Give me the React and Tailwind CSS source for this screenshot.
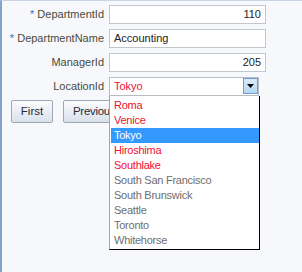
export default function App() {
  const items = [
    { t: "Roma", c: "red" },
    { t: "Venice", c: "red" },
    { t: "Tokyo", c: "sel" },
    { t: "Hiroshima", c: "red" },
    { t: "Southlake", c: "red" },
    { t: "South San Francisco", c: "gray" },
    { t: "South Brunswick", c: "gray" },
    { t: "Seattle", c: "gray" },
    { t: "Toronto", c: "gray" },
    { t: "Whitehorse", c: "gray" },
  ];
  return (
    <div className="w-[302px] h-[272px] bg-[#f6f8fb] border-l-2 border-l-[#86a3cc] border-t border-t-[#c9d5e3] font-['Liberation_Sans',Arial,sans-serif] text-[11px] text-[#222] overflow-hidden">
      <div className="pt-[4px] flex flex-col gap-[5px]">
        <div className="flex items-center h-[19px]">
          <div className="w-[102px] text-right text-[#4b4a3c]"><span className="text-[#3b6fb3]">*</span> DepartmentId</div>
          <div className="ml-[5px] w-[157px] h-[19px] bg-white border border-[#c3c7cc] flex items-center justify-end pr-[4px]">110</div>
        </div>
        <div className="flex items-center h-[19px]">
          <div className="w-[102px] text-right text-[#4b4a3c]"><span className="text-[#3b6fb3]">*</span> DepartmentName</div>
          <div className="ml-[5px] w-[157px] h-[19px] bg-white border border-[#c3c7cc] flex items-center pl-[4px]">Accounting</div>
        </div>
        <div className="flex items-center h-[19px]">
          <div className="w-[102px] text-right text-[#4b4a3c]">ManagerId</div>
          <div className="ml-[5px] w-[157px] h-[19px] bg-white border border-[#c3c7cc] flex items-center justify-end pr-[4px]">205</div>
        </div>
        <div className="flex items-center h-[19px]">
          <div className="w-[102px] text-right text-[#4b4a3c]">LocationId</div>
          <div className="relative ml-[5px] w-[150px] h-[19px]">
            <div className="w-full h-full bg-white border border-[#b9bdc3] flex items-center pl-[4px] text-[#ee1133]">
              Tokyo
            </div>
            <div className="absolute right-[1px] top-[1px] w-[15px] h-[16px] border border-[#6f9dcc] bg-gradient-to-b from-[#d9ecfb] to-[#b5d6f2] flex items-center justify-center">
              <svg width="7" height="4" viewBox="0 0 7 4"><path d="M0 0h7L3.5 4z" fill="#000" /></svg>
            </div>
            <div className="absolute left-0 top-[19px] w-[151px] bg-white border-l border-l-[#a6a6a6] border-r border-r-black border-b border-b-black pt-[2px] pb-[1px] pl-[1px] z-10 tracking-[-0.25px]">
              {items.map((it) => (
                <div
                  key={it.t}
                  className={
                    "h-[15px] leading-[15px] pl-[3px] whitespace-nowrap " +
                    (it.c === "sel"
                      ? "bg-[#3399ff] text-white"
                      : it.c === "red"
                      ? "text-[#f0102c]"
                      : "text-[#6e6e6e]")
                  }
                >
                  {it.t}
                </div>
              ))}
            </div>
          </div>
        </div>
      </div>
      <div className="flex gap-[10px] mt-[4px] pl-[9px]">
        <div className="w-[42px] h-[23px] border border-[#9ea7b3] rounded-[2px] bg-gradient-to-b from-[#fbfcfd] to-[#d9e1ec] flex items-center justify-center text-[11.5px] text-[#1e2a3a]">First</div>
        <div className="w-[62px] h-[23px] border border-[#9ea7b3] rounded-[2px] bg-gradient-to-b from-[#fbfcfd] to-[#d9e1ec] flex items-center pl-[9px] text-[11.5px] tracking-[-0.3px] text-[#1e2a3a]">Previous</div>
      </div>
    </div>
  );
}
